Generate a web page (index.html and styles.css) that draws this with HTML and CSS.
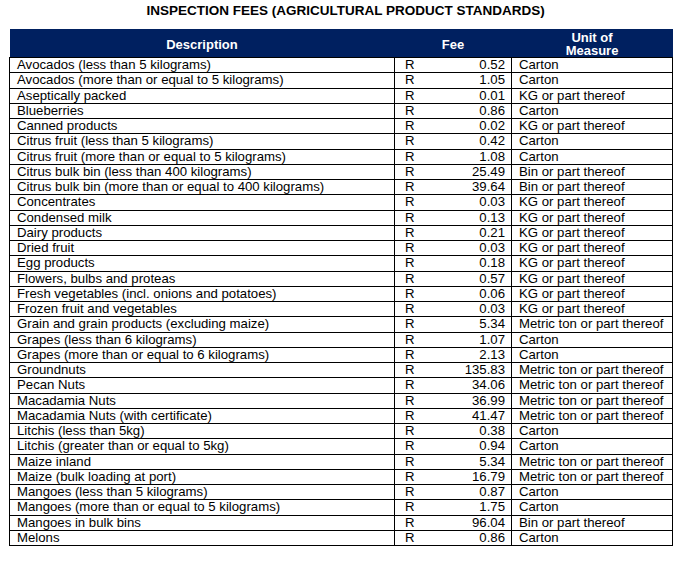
FILE: index.html
```html
<!DOCTYPE html>
<html>
<head>
<meta charset="utf-8">
<link rel="stylesheet" href="styles.css">
</head>
<body>
<h1 class="title">INSPECTION FEES (AGRICULTURAL PRODUCT STANDARDS)</h1>
<table class="fees">
  <colgroup>
    <col class="c-desc"><col class="c-r"><col class="c-val"><col class="c-unit">
  </colgroup>
  <thead>
    <tr><th>Description</th><th colspan="2">Fee</th><th>Unit of<br>Measure</th></tr>
  </thead>
  <tbody>
    <tr><td>Avocados (less than 5 kilograms)</td><td class="r">R</td><td class="v">0.52</td><td>Carton</td></tr>
    <tr><td>Avocados (more than or equal to 5 kilograms)</td><td class="r">R</td><td class="v">1.05</td><td>Carton</td></tr>
    <tr><td>Aseptically packed</td><td class="r">R</td><td class="v">0.01</td><td>KG or part thereof</td></tr>
    <tr><td>Blueberries</td><td class="r">R</td><td class="v">0.86</td><td>Carton</td></tr>
    <tr><td>Canned products</td><td class="r">R</td><td class="v">0.02</td><td>KG or part thereof</td></tr>
    <tr><td>Citrus fruit (less than 5 kilograms)</td><td class="r">R</td><td class="v">0.42</td><td>Carton</td></tr>
    <tr><td>Citrus fruit (more than or equal to 5 kilograms)</td><td class="r">R</td><td class="v">1.08</td><td>Carton</td></tr>
    <tr><td>Citrus bulk bin (less than 400 kilograms)</td><td class="r">R</td><td class="v">25.49</td><td>Bin or part thereof</td></tr>
    <tr><td>Citrus bulk bin (more than or equal to 400 kilograms)</td><td class="r">R</td><td class="v">39.64</td><td>Bin or part thereof</td></tr>
    <tr><td>Concentrates</td><td class="r">R</td><td class="v">0.03</td><td>KG or part thereof</td></tr>
    <tr><td>Condensed milk</td><td class="r">R</td><td class="v">0.13</td><td>KG or part thereof</td></tr>
    <tr><td>Dairy products</td><td class="r">R</td><td class="v">0.21</td><td>KG or part thereof</td></tr>
    <tr><td>Dried fruit</td><td class="r">R</td><td class="v">0.03</td><td>KG or part thereof</td></tr>
    <tr><td>Egg products</td><td class="r">R</td><td class="v">0.18</td><td>KG or part thereof</td></tr>
    <tr><td>Flowers, bulbs and proteas</td><td class="r">R</td><td class="v">0.57</td><td>KG or part thereof</td></tr>
    <tr><td>Fresh vegetables (incl. onions and potatoes)</td><td class="r">R</td><td class="v">0.06</td><td>KG or part thereof</td></tr>
    <tr><td>Frozen fruit and vegetables</td><td class="r">R</td><td class="v">0.03</td><td>KG or part thereof</td></tr>
    <tr><td>Grain and grain products (excluding maize)</td><td class="r">R</td><td class="v">5.34</td><td>Metric ton or part thereof</td></tr>
    <tr><td>Grapes (less than 6 kilograms)</td><td class="r">R</td><td class="v">1.07</td><td>Carton</td></tr>
    <tr><td>Grapes (more than or equal to 6 kilograms)</td><td class="r">R</td><td class="v">2.13</td><td>Carton</td></tr>
    <tr><td>Groundnuts</td><td class="r">R</td><td class="v">135.83</td><td>Metric ton or part thereof</td></tr>
    <tr><td>Pecan Nuts</td><td class="r">R</td><td class="v">34.06</td><td>Metric ton or part thereof</td></tr>
    <tr><td>Macadamia Nuts</td><td class="r">R</td><td class="v">36.99</td><td>Metric ton or part thereof</td></tr>
    <tr><td>Macadamia Nuts (with certificate)</td><td class="r">R</td><td class="v">41.47</td><td>Metric ton or part thereof</td></tr>
    <tr><td>Litchis (less than 5kg)</td><td class="r">R</td><td class="v">0.38</td><td>Carton</td></tr>
    <tr><td>Litchis (greater than or equal to 5kg)</td><td class="r">R</td><td class="v">0.94</td><td>Carton</td></tr>
    <tr><td>Maize inland</td><td class="r">R</td><td class="v">5.34</td><td>Metric ton or part thereof</td></tr>
    <tr><td>Maize (bulk loading at port)</td><td class="r">R</td><td class="v">16.79</td><td>Metric ton or part thereof</td></tr>
    <tr><td>Mangoes (less than 5 kilograms)</td><td class="r">R</td><td class="v">0.87</td><td>Carton</td></tr>
    <tr><td>Mangoes (more than or equal to 5 kilograms)</td><td class="r">R</td><td class="v">1.75</td><td>Carton</td></tr>
    <tr><td>Mangoes in bulk bins</td><td class="r">R</td><td class="v">96.04</td><td>Bin or part thereof</td></tr>
    <tr><td>Melons</td><td class="r">R</td><td class="v">0.86</td><td>Carton</td></tr>
  </tbody>
</table>
</body>
</html>
```

FILE: styles.css
```css
html, body {
  margin: 0;
  padding: 0;
  background: #ffffff;
}
body {
  font-family: "Liberation Sans", Arial, sans-serif;
  color: #000;
  padding: 3px 0 0 9px;
}
.title {
  margin: 0 0 11px 0;
  padding-left: 5px;
  width: 663px;
  text-align: center;
  font-size: 13.5px;
  line-height: 15px;
  font-weight: bold;
}
.fees {
  border-collapse: collapse;
  table-layout: fixed;
  width: 663px;
  font-size: 13.2px;
}
.c-desc { width: 385px; }
.c-r { width: 30px; }
.c-val { width: 87px; }
.c-unit { width: 161px; }
.fees th {
  background: #002060;
  color: #fff;
  font-weight: bold;
  font-size: 13px;
  height: 26px;
  padding: 2px 0 0;
  line-height: 13px;
  text-align: center;
  border: 0;
}
.fees td {
  border: 1px solid #000;
  height: 14.26px;
  padding: 0 7px;
  line-height: 14px;
  white-space: nowrap;
  vertical-align: middle;
}
.fees td.r {
  border-right: 0;
  padding: 0 0 0 10px;
}
.fees td.v {
  border-left: 0;
  text-align: right;
  padding: 0 6px 0 0;
}
```
